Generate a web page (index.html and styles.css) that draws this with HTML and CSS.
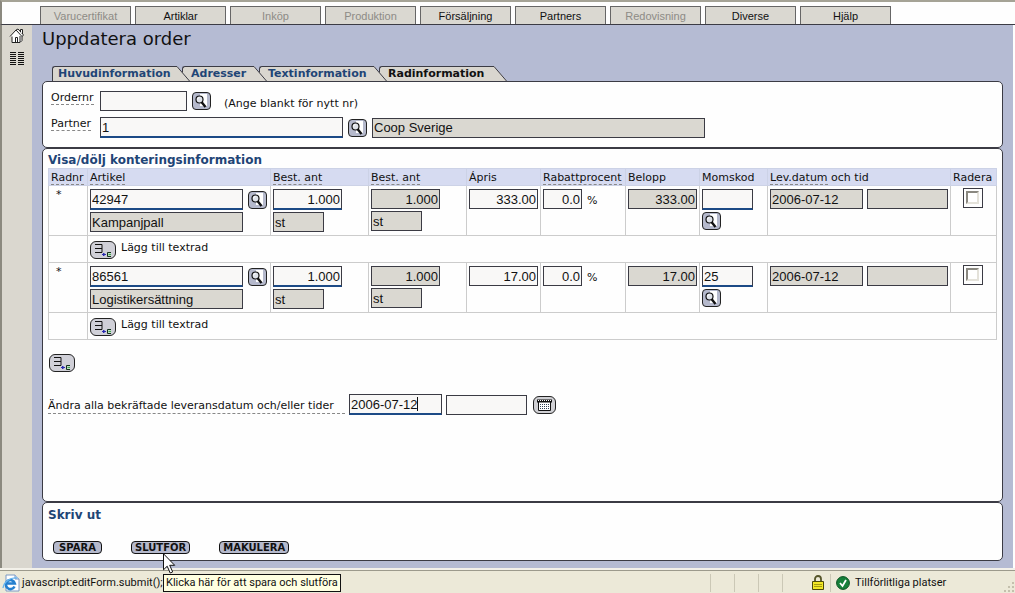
FILE: index.html
```html
<!DOCTYPE html>
<html lang="sv">
<head>
    <meta charset="UTF-8">
    <meta name="viewport" content="width=device-width, initial-scale=1.0">
    <title>Uppdatera order</title>
    <link rel="stylesheet" href="styles.css">
</head>
<body>
    <!-- shared icons -->
    <svg class="defs" width="0" height="0">
        <symbol id="search" viewBox="0 0 17 16">
            <path d="M7 1h7v12H7z" fill="#fff"/>
            <circle cx="6.500" cy="6.500" r="3.500" fill="#dfe3ea" stroke="#111" stroke-width="1.200"/>
            <path d="M4.500 6.500a2 2 0 0 1 2-2" fill="none" stroke="#fff"/>
            <path d="M8.500 9l4 5" stroke="#111" stroke-width="2.400"/>
        </symbol>
        <symbol id="addrow" viewBox="0 0 24 16">
            <path d="M4 2.500h7v8H4M4 6.500h7" fill="none" stroke="#111"/>
            <path d="M11 12.500h4M13 11l-1.500 1.500 1.500 1.500z" fill="#2b2bb0" stroke="#2b2bb0"/>
            <path d="M20 10.500h-3.500v4H20" fill="#bfe0c4" stroke="#14301c"/>
            <path d="M17.500 12.500h2.500" stroke="#3fa04c"/>
        </symbol>
    </svg>

    <nav class="menu">
        <button class="menu-item" disabled>Varucertifikat</button>
        <button class="menu-item">Artiklar</button>
        <button class="menu-item" disabled>Inköp</button>
        <button class="menu-item" disabled>Produktion</button>
        <button class="menu-item">Försäljning</button>
        <button class="menu-item">Partners</button>
        <button class="menu-item" disabled>Redovisning</button>
        <button class="menu-item">Diverse</button>
        <button class="menu-item">Hjälp</button>
    </nav>

    <div class="page">
        <aside class="sidebar">
            <a href="#" aria-label="Hem">
                <svg width="16" height="16" viewBox="0 0 16 16">
                    <path d="M3 8v6.500h8l2-2V7L8 3z" fill="#fff" stroke="#222"/>
                    <path d="M1 8.500l6-6.500 6 6.500M7 2l2-1 5.500 6-1.500 1.500" fill="#fff" stroke="#222"/>
                    <path d="M11.500 4V1.500h2V6" fill="#fff" stroke="#222"/>
                    <path d="M6.500 14V9.500h2V14M11 14V8" fill="none" stroke="#222"/>
                </svg>
            </a>
            <a href="#" aria-label="Lista">
                <svg width="16" height="14" viewBox="0 0 16 14">
                    <path d="M1 1.500h6M1 3.500h6M1 5.500h6M1 7.500h6M1 9.500h6M1 11.500h6M1 13.500h6M9 1.500h6M9 3.500h6M9 5.500h6M9 7.500h6M9 9.500h6M9 11.500h6M9 13.500h6" stroke="#111"/>
                </svg>
            </a>
        </aside>

        <main class="content">
            <h1>Uppdatera order</h1>

            <div class="tabs">
                <a href="#" class="tab tab-wide"><span>Huvudinformation</span><svg width="13" height="15" viewBox="0 0 13 15"><path d="M0 0L13 15H0z" fill="#d9d6cf"/><path d="M0 .5L12.500 15" stroke="#3b3b44"/></svg></a>
                <a href="#" class="tab tab-small"><span>Adresser</span><svg width="13" height="15" viewBox="0 0 13 15"><path d="M0 0L13 15H0z" fill="#d9d6cf"/><path d="M0 .5L12.500 15" stroke="#3b3b44"/></svg></a>
                <a href="#" class="tab tab-mid"><span>Textinformation</span><svg width="13" height="15" viewBox="0 0 13 15"><path d="M0 0L13 15H0z" fill="#d9d6cf"/><path d="M0 .5L12.500 15" stroke="#3b3b44"/></svg></a>
                <a href="#" class="tab tab-mid active"><span>Radinformation</span><svg width="13" height="15" viewBox="0 0 13 15"><path d="M0 0L13 15H0z" fill="#d9d6cf"/><path d="M0 .5L12.500 15" stroke="#3b3b44"/></svg></a>
            </div>

            <section class="panel head">
                <div class="line">
                    <label for="ordernr"><span class="dash">Ordernr</span></label>
                    <input type="text" id="ordernr" class="field w-order">
                    <button class="icon" aria-label="Sök order"><svg><use href="#search"/></svg></button>
                    <span class="hint">(Ange blankt för nytt nr)</span>
                </div>
                <div class="line">
                    <label for="partner"><span class="dash">Partner</span></label>
                    <input type="text" id="partner" class="field req w-partner" value="1">
                    <button class="icon" aria-label="Sök partner"><svg><use href="#search"/></svg></button>
                    <input type="text" class="field w-name" value="Coop Sverige" aria-label="Partnernamn" readonly>
                </div>
            </section>

            <section class="panel rows">
                <a href="#" class="heading">Visa/dölj konteringsinformation</a>
                <table>
                    <colgroup>
                        <col class="c-nr"><col class="c-art"><col class="c-ant"><col class="c-ant"><col class="c-sum">
                        <col class="c-rab"><col class="c-sum"><col class="c-moms"><col><col class="c-del">
                    </colgroup>
                    <thead>
                        <tr>
                            <th><span class="dash">Radnr</span></th>
                            <th><span class="dash">Artikel</span></th>
                            <th><span class="dash">Best. ant</span></th>
                            <th><span class="dash">Best. ant</span></th>
                            <th>Ápris</th>
                            <th><span class="dash">Rabattprocent</span></th>
                            <th>Belopp</th>
                            <th>Momskod</th>
                            <th><span class="dash">Lev.datum</span> och tid</th>
                            <th>Radera</th>
                        </tr>
                    </thead>
                    <tbody>
                        <tr class="item">
                            <td class="star">*</td>
                            <td>
                                <div class="stack">
                                    <div class="pair"><input type="text" class="field req w-art" value="42947" aria-label="Artikel"><button class="icon" aria-label="Sök artikel"><svg><use href="#search"/></svg></button></div>
                                    <input type="text" class="field w-art" value="Kampanjpall" aria-label="Benämning" readonly>
                                </div>
                            </td>
                            <td>
                                <div class="stack">
                                    <input type="text" class="field req num w-num" value="1.000" aria-label="Antal">
                                    <input type="text" class="field w-unit" value="st" aria-label="Enhet" readonly>
                                </div>
                            </td>
                            <td>
                                <div class="stack">
                                    <input type="text" class="field num w-num" value="1.000" aria-label="Antal" readonly>
                                    <input type="text" class="field w-unit" value="st" aria-label="Enhet" readonly>
                                </div>
                            </td>
                            <td><input type="text" class="field num w-num" value="333.00" aria-label="Ápris"></td>
                            <td><div class="pair"><input type="text" class="field num w-rab" value="0.0" aria-label="Rabattprocent"><span class="percent">%</span></div></td>
                            <td><input type="text" class="field num w-num" value="333.00" aria-label="Belopp" readonly></td>
                            <td>
                                <div class="stack">
                                    <input type="text" class="field req w-unit" aria-label="Momskod">
                                    <button class="icon" aria-label="Sök momskod"><svg><use href="#search"/></svg></button>
                                </div>
                            </td>
                            <td><div class="pair dates"><input type="text" class="field w-date" value="2006-07-12" aria-label="Leveransdatum" readonly><input type="text" class="field w-time" aria-label="Tid" readonly></div></td>
                            <td class="center"><label class="box"><input type="checkbox" aria-label="Radera"></label></td>
                        </tr>
                        <tr class="textrow">
                            <td></td>
                            <td colspan="9"><div class="pair"><button class="icon add" aria-label="Lägg till textrad"><svg><use href="#addrow"/></svg></button><span class="addtext">Lägg till textrad</span></div></td>
                        </tr>
                        <tr class="item">
                            <td class="star">*</td>
                            <td>
                                <div class="stack">
                                    <div class="pair"><input type="text" class="field req w-art" value="86561" aria-label="Artikel"><button class="icon" aria-label="Sök artikel"><svg><use href="#search"/></svg></button></div>
                                    <input type="text" class="field w-art" value="Logistikersättning" aria-label="Benämning" readonly>
                                </div>
                            </td>
                            <td>
                                <div class="stack">
                                    <input type="text" class="field req num w-num" value="1.000" aria-label="Antal">
                                    <input type="text" class="field w-unit" value="st" aria-label="Enhet" readonly>
                                </div>
                            </td>
                            <td>
                                <div class="stack">
                                    <input type="text" class="field num w-num" value="1.000" aria-label="Antal" readonly>
                                    <input type="text" class="field w-unit" value="st" aria-label="Enhet" readonly>
                                </div>
                            </td>
                            <td><input type="text" class="field num w-num" value="17.00" aria-label="Ápris"></td>
                            <td><div class="pair"><input type="text" class="field num w-rab" value="0.0" aria-label="Rabattprocent"><span class="percent">%</span></div></td>
                            <td><input type="text" class="field num w-num" value="17.00" aria-label="Belopp" readonly></td>
                            <td>
                                <div class="stack">
                                    <input type="text" class="field req w-unit" value="25" aria-label="Momskod">
                                    <button class="icon" aria-label="Sök momskod"><svg><use href="#search"/></svg></button>
                                </div>
                            </td>
                            <td><div class="pair dates"><input type="text" class="field w-date" value="2006-07-12" aria-label="Leveransdatum" readonly><input type="text" class="field w-time" aria-label="Tid" readonly></div></td>
                            <td class="center"><label class="box"><input type="checkbox" aria-label="Radera"></label></td>
                        </tr>
                        <tr class="textrow">
                            <td></td>
                            <td colspan="9"><div class="pair"><button class="icon add" aria-label="Lägg till textrad"><svg><use href="#addrow"/></svg></button><span class="addtext">Lägg till textrad</span></div></td>
                        </tr>
                    </tbody>
                </table>
                <button class="icon add newrow" aria-label="Lägg till rad"><svg><use href="#addrow"/></svg></button>
                <div class="change">
                    <label for="alldate" class="dash">Ändra alla bekräftade leveransdatum och/eller tider</label>
                    <span class="caret"><input type="text" id="alldate" class="field req w-date" value="2006-07-12"></span>
                    <input type="text" class="field w-time" aria-label="Tid">
                    <button class="icon cal" aria-label="Kalender">
                        <svg viewBox="0 0 21 16">
                            <path d="M4.500 4.500h12v9h-12z" fill="#fff" stroke="#111"/>
                            <path d="M3 4h15" stroke="#111" stroke-width="3"/>
                            <path d="M4 3.500h13" stroke="#fff" stroke-dasharray="1 1"/>
                            <path d="M6 7.500h9M6 9.500h9M6 11.500h9" stroke="#345" stroke-dasharray="1 1"/>
                        </svg>
                    </button>
                </div>
            </section>

            <section class="panel foot">
                <a href="#" class="heading">Skriv ut</a>
                <div class="actions">
                    <button class="action">SPARA</button>
                    <div class="hover">
                        <button class="action">SLUTFÖR</button>
                        <svg class="cursor" width="13" height="21" viewBox="0 0 13 21">
                            <path d="M.5.800v16l3.700-3.600 3 6.800 2.500-1.100-3-6.600h5z" fill="#fff" stroke="#111"/>
                        </svg>
                        <div class="tooltip">Klicka här för att spara och slutföra</div>
                    </div>
                    <button class="action">MAKULERA</button>
                </div>
            </section>
        </main>
    </div>

    <footer class="status">
        <svg width="18" height="18" viewBox="0 0 18 18">
            <path d="M4 1h9l4 4v12H4z" fill="#fff" stroke="#7d9ac4"/>
            <path d="M13 1v4h4" fill="#cfe0f5" stroke="#7d9ac4"/>
            <path d="M12.500 12.500A4.500 4.500 0 1 1 12.800 9.500H5" fill="none" stroke="#2580cf" stroke-width="2.600"/>
            <path d="M1 14C2 8 8 3 15 4" fill="none" stroke="#67b5ee" stroke-width="1.300"/>
        </svg>
        <span class="url">javascript:editForm.submit();</span>
        <span class="cell"></span>
        <span class="cell"></span>
        <span class="cell"></span>
        <span class="cell"></span>
        <span class="cell lock">
            <svg width="12" height="15" viewBox="0 0 12 15">
                <path d="M3 7V4a3 3 0 0 1 6 0v3" fill="none" stroke="#55552a" stroke-width="1.800"/>
                <path d="M.5 6.500h11v8H.5z" fill="#f2e624" stroke="#4a4708"/>
                <path d="M2 9.500h8M2 11.500h8" stroke="#a39a10"/>
            </svg>
        </span>
        <span class="zone">
            <svg width="14" height="14" viewBox="0 0 14 14">
                <circle cx="7" cy="7" r="6.400" fill="#16803a" stroke="#0b5222"/>
                <path d="M4 7l2.500 3L10 4" fill="none" stroke="#fff" stroke-width="1.800"/>
            </svg>
            Tillförlitliga platser
        </span>
        <svg class="grip" width="12" height="12" viewBox="0 0 12 12">
            <path d="M9 1h2v2H9zM5 5h2v2H5zM9 5h2v2H9zM1 9h2v2H1zM5 9h2v2H5zM9 9h2v2H9z" fill="#c4c0ad"/>
        </svg>
    </footer>
</body>
</html>
```

FILE: styles.css
```css
* {
    box-sizing: border-box;
}

body {
    margin: 0;
    min-height: 100vh;
    display: flex;
    flex-direction: column;
    background-color: #fefefe;
    color: #111;
    font-family: "DejaVu Sans", Verdana, sans-serif;
    font-size: 11px;
    line-height: 14px;
}

.defs {
    display: none;
}

a {
    color: #1f4576;
    text-decoration: none;
}

button,
input {
    margin: 0;
    font-family: "Liberation Sans", Arial, sans-serif;
    color: #111;
}

/* top menu */
.menu {
    display: flex;
    gap: 4px;
    padding: 4px 0 0 38px;
    border-top: 2px solid #a5a396;
    border-left: 2px solid #8b897f;
    border-bottom: 1px solid #3b3b44;
}

.menu-item {
    width: 91px;
    height: 18px;
    padding: 1px 0 0;
    border: 1px solid #666;
    border-bottom: 0;
    background-color: #dad8d1;
    font-size: 11px;
    line-height: 14px;
}

.menu-item:disabled {
    color: #8d8b86;
}

.page {
    flex: 1;
    display: flex;
    margin-right: 2px;
    border-left: 2px solid #8b897f;
}

.sidebar {
    width: 30px;
    padding: 3px 0 0 7px;
    background-color: #dad7cf;
}

.sidebar a {
    display: block;
    height: 23px;
}

.content {
    flex: 1;
    display: flex;
    flex-direction: column;
    padding: 4px 10px 7px;
    background-color: #b5bbd3;
}

h1 {
    margin: 0 0 17px;
    font-size: 18px;
    font-weight: normal;
    line-height: 20px;
}

/* tabs */
.tabs {
    display: flex;
    padding-left: 10px;
}

.tab {
    position: relative;
    display: flex;
    height: 15px;
    margin-right: -8px;
    font-weight: bold;
}

.tab span {
    flex: 1;
    padding-left: 5px;
    border: 1px solid #3b3b44;
    border-width: 1px 0 0 1px;
    border-radius: 3px 0 0 0;
    background-color: #d9d6cf;
    white-space: nowrap;
}

.tab:nth-child(1) { z-index: 3; }
.tab:nth-child(2) { z-index: 2; }
.tab:nth-child(3) { z-index: 1; }

.tab-wide { width: 138px; }
.tab-small { width: 85px; }
.tab-mid { width: 128px; }

.tab-small span,
.tab-mid span {
    padding-left: 8px;
}

.tab.active {
    color: #111;
}

/* panels */
.panel {
    border: 1px solid #3b3b44;
    border-radius: 5px;
    background-color: #fefefe;
}

.head {
    display: flex;
    flex-direction: column;
    gap: 6px;
    padding: 9px 8px;
}

.line {
    display: flex;
    align-items: center;
    gap: 5px;
}

.line label {
    width: 44px;
    align-self: flex-start;
}

.hint {
    padding: 6px 0 0 8px;
}

.dash {
    border-bottom: 1px dashed #888;
}

.heading {
    font-size: 12px;
    font-weight: bold;
}

.rows {
    flex: 1;
    padding: 4px 5px 0;
}

/* fields */
.field {
    display: block;
    height: 20px;
    padding: 0 1px;
    border: 1px solid #3b3b44;
    border-radius: 0;
    background-color: #f9f8f7;
    font-size: 13px;
    outline: none;
}

.field:read-only {
    background-color: #dad8d1;
}

.req {
    height: 21px;
    border-bottom: 2px solid #1c4a86;
}

.num {
    text-align: right;
}

.w-order { width: 87px; }
.w-partner { width: 243px; }
.w-name { width: 333px; }
.w-art { width: 153px; }
.w-num { width: 69px; }
.w-unit { width: 51px; }
.w-rab { width: 39px; }
.w-date { width: 93px; }
.w-time { width: 81px; }

.icon {
    display: block;
    flex: none;
    width: 19px;
    height: 18px;
    padding: 0;
    border: 1px solid #222;
    border-radius: 4px;
    background-color: #b5b9cc;
}

.icon svg {
    display: block;
    width: 100%;
    height: 100%;
}

.add {
    width: 26px;
    border-radius: 6px;
    background-color: #d0d0d8;
}

.cal {
    width: 23px;
    border-radius: 6px;
    background-color: #d0d0d4;
}

/* order rows */
table {
    width: 100%;
    table-layout: fixed;
    border-collapse: collapse;
}

.c-nr { width: 39px; }
.c-art { width: 183px; }
.c-ant { width: 98px; }
.c-sum { width: 74px; }
.c-rab { width: 85px; }
.c-moms { width: 68px; }
.c-del { width: 46px; }

th,
td {
    padding: 3px 0 0 2px;
    border: 1px solid #ccc;
    text-align: left;
    vertical-align: top;
}

th {
    height: 17px;
    padding-top: 2px;
    border-color: #ccd2e6;
    background-color: #d6dbf1;
    font-weight: normal;
    white-space: nowrap;
}

.item td {
    height: 50px;
}

.textrow td {
    height: 27px;
    padding-top: 5px;
}

.item .star {
    padding: 2px 0 0 7px;
}

.stack {
    display: flex;
    flex-direction: column;
    gap: 2px;
}

.pair {
    display: flex;
    align-items: center;
    gap: 5px;
}

.dates {
    gap: 4px;
}

.percent {
    padding-top: 3px;
}

.addtext {
    padding-bottom: 4px;
}

.center {
    padding-top: 2px;
}

.box {
    display: block;
    width: 20px;
    height: 20px;
    margin-left: 10px;
    padding: 2px;
    border: 1px solid #3b3b44;
}

.box input {
    display: block;
    appearance: none;
    width: 13px;
    height: 13px;
    border: 2px solid #e4e2da;
    border-top-color: #8a8880;
    border-left-color: #8a8880;
    background-color: #fff;
}

.newrow {
    margin: 14px 0 0 1px;
}

.change {
    display: flex;
    align-items: center;
    gap: 4px;
    margin-top: 22px;
}

.change label {
    width: 297px;
    padding-top: 3px;
}

.change .icon {
    margin-left: 2px;
}

.caret {
    position: relative;
}

.caret::after {
    content: "";
    position: absolute;
    top: 3px;
    left: 68px;
    width: 1px;
    height: 14px;
    background-color: #111;
}

/* footer buttons */
.foot {
    padding: 5px 5px 6px;
}

.actions {
    display: flex;
    gap: 29px;
    margin: 18px 0 0 5px;
}

.action {
    display: block;
    min-width: 49px;
    height: 13px;
    padding: 0 3px;
    border: 1px solid #111;
    border-radius: 4px;
    background-color: #b5b9cc;
    font-family: "DejaVu Sans", Verdana, sans-serif;
    font-size: 10px;
    font-weight: bold;
    line-height: 11px;
}

.hover {
    position: relative;
}

.cursor {
    position: absolute;
    top: 12px;
    left: 32px;
    z-index: 5;
}

.tooltip {
    position: absolute;
    top: 33px;
    left: 32px;
    z-index: 4;
    padding: 1px 2px;
    border: 1px solid #111;
    background-color: #ffffe1;
    font-family: Roboto, Tahoma, sans-serif;
    white-space: nowrap;
}

/* status bar */
.status {
    display: flex;
    align-items: center;
    height: 25px;
    padding: 2px 0 0 2px;
    border-top: 2px solid #f3f1ea;
    background-color: #ece9d8;
    box-shadow: inset 0 1px 0 #9c9a8c;
    font-family: Roboto, Tahoma, sans-serif;
}

.url {
    flex: 1;
    padding-left: 2px;
}

.cell {
    width: 24px;
    height: 18px;
    border-left: 1px solid #cbc8b6;
}

.lock {
    display: flex;
    align-items: center;
    padding-left: 6px;
    border-left: 0;
}

.zone {
    display: flex;
    align-items: center;
    gap: 5px;
    width: 173px;
    height: 18px;
    padding-left: 5px;
    border-left: 1px solid #cbc8b6;
}

.grip {
    align-self: flex-end;
}
```
